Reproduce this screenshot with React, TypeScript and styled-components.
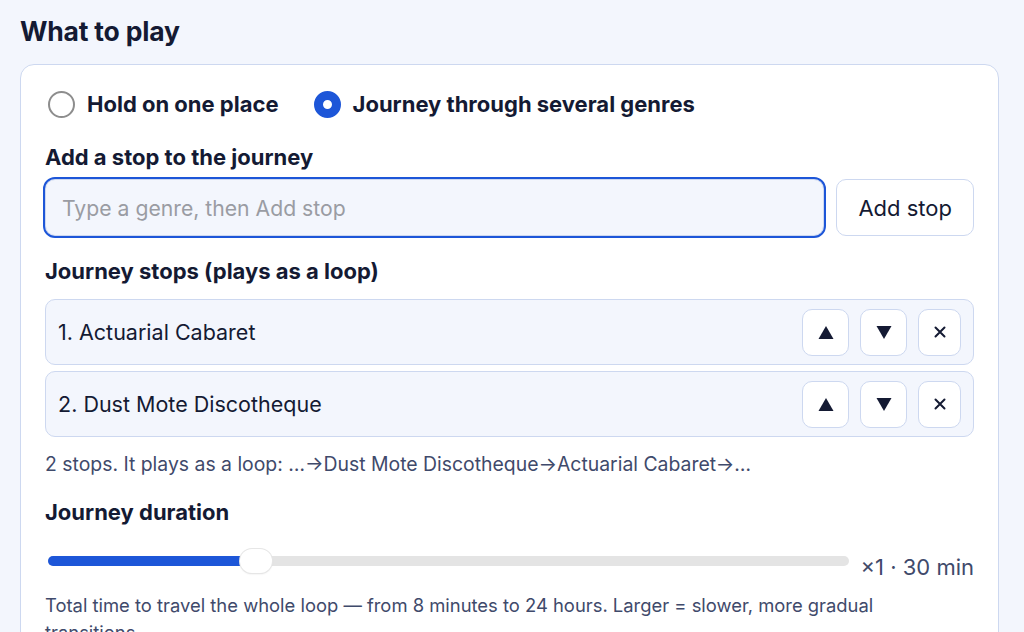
import styled, { createGlobalStyle } from "styled-components";

const GlobalStyle = createGlobalStyle`
  html, body {
    margin: 0;
    background: #f3f6fd;
    font-family: Inter, "Noto Sans", "Liberation Sans", sans-serif;
    color: #141a33;
  }
`;

const Page = styled.div`
  padding: 14px 25px 0 20px;
  height: 632px;
  overflow: hidden;
  box-sizing: border-box;
`;

const Heading = styled.h2`
  margin: 0 0 16px;
  font-size: 26.5px;
  line-height: 34px;
  font-weight: 700;
  letter-spacing: -0.2px;
`;

const Card = styled.div`
  background: #fff;
  border: 1px solid #cdd8f0;
  border-radius: 14px;
  padding: 25px 24px 24px;
`;

const RadioGroup = styled.div`
  display: flex;
  align-items: center;
  gap: 32px;
  margin-bottom: 27px;
`;

const RadioOption = styled.label`
  display: flex;
  align-items: center;
  gap: 12px;
  font-size: 22px;
  font-weight: 700;
  line-height: 28px;
`;

const RadioDot = styled.span<{ checked?: boolean }>`
  box-sizing: border-box;
  width: 27px;
  height: 27px;
  border-radius: 50%;
  border: ${(p) => (p.checked ? "9px solid #1d56d8" : "2px solid #8d8d8d")};
  background: #fff;
  margin-left: 3px;
`;

const Label = styled.div<{ spaced?: boolean }>`
  font-size: 22px;
  font-weight: 700;
  line-height: 24px;
  margin: ${(p) => (p.spaced ? "4px" : "0")} 0 10px;
`;

const InputRow = styled.div`
  display: flex;
  align-items: center;
  gap: 12px;
  margin-bottom: 23px;
`;

const TextInput = styled.input`
  flex: 1;
  box-sizing: border-box;
  height: 57px;
  margin: 0;
  padding: 0 16px;
  border: 1px solid #cdd8f0;
  border-radius: 10px;
  background: #f3f6fd;
  font: inherit;
  font-size: 21.2px;
  color: #141a33;
  outline: 2px solid #1d56d8;
  outline-offset: 0;
  &::placeholder {
    color: #9a9ca3;
  }
`;

const Button = styled.button`
  box-sizing: border-box;
  height: 57px;
  padding: 0 21px;
  border: 1px solid #cdd8f0;
  border-radius: 10px;
  background: #fff;
  font: inherit;
  font-size: 22px;
  color: #141a33;
`;

const StopList = styled.div`
  display: flex;
  flex-direction: column;
  gap: 6px;
  margin-top: 16px;
  margin-bottom: 16px;
`;

const StopRow = styled.div`
  display: flex;
  align-items: center;
  height: 66px;
  box-sizing: border-box;
  padding: 0 12px;
  background: #f3f6fd;
  border: 1px solid #cdd8f0;
  border-radius: 10px;
`;

const StopName = styled.span`
  flex: 1;
  font-size: 21.5px;
  line-height: 24px;
`;

const StopActions = styled.div`
  display: flex;
  gap: 11px;
`;

const IconButton = styled.button<{ narrow?: boolean }>`
  box-sizing: border-box;
  width: ${(p) => (p.narrow ? "43px" : "47px")};
  height: 47px;
  padding: 0;
  display: flex;
  align-items: center;
  justify-content: center;
  border: 1.5px solid #cdd8f0;
  border-radius: 10px;
  background: #fff;
  color: #141a33;
`;

const Summary = styled.p`
  margin: 0 0 25px;
  font-size: 19.4px;
  line-height: 22px;
  color: #3f4a6b;
`;

const SliderRow = styled.div`
  display: flex;
  align-items: center;
  gap: 12px;
  margin-top: 28px;
  height: 30px;
`;

const Track = styled.div`
  position: relative;
  flex: 1;
  height: 10px;
  margin-left: 3px;
  margin-top: -12px;
  border-radius: 5px;
  background: #e4e4e4;
`;

const Fill = styled.div`
  height: 100%;
  border-radius: 5px;
  background: #1d56d8;
`;

const Thumb = styled.div`
  position: absolute;
  top: 50%;
  width: 32px;
  height: 24px;
  border-radius: 12px;
  background: #fff;
  box-shadow: 0 0 0 1px #e6e6e6, 0 1px 2px rgba(0, 0, 0, 0.12);
  transform: translate(-50%, -50%);
`;

const Value = styled.span`
  font-size: 22px;
  line-height: 24px;
  color: #3f4a6b;
  white-space: nowrap;
`;

const Hint = styled.p`
  margin: 10px 0 0;
  font-size: 18.4px;
  line-height: 27px;
  color: #3f4a6b;
`;

const UpIcon = () => (
  <svg width="16" height="15" viewBox="0 0 16 15">
    <polygon points="8,1 15.5,14 0.5,14" fill="currentColor" />
  </svg>
);

const DownIcon = () => (
  <svg width="16" height="15" viewBox="0 0 16 15">
    <polygon points="0.5,1 15.5,1 8,14" fill="currentColor" />
  </svg>
);

const CloseIcon = () => (
  <svg width="12" height="12" viewBox="0 0 12 12">
    <path d="M1.5 1.5 L10.5 10.5 M10.5 1.5 L1.5 10.5" stroke="currentColor" strokeWidth="2" strokeLinecap="round" />
  </svg>
);

const stops = ["Actuarial Cabaret", "Dust Mote Discotheque"];
const duration = 26;

export default function App() {
  return (
    <Page>
      <GlobalStyle />
      <Heading>What to play</Heading>
      <Card>
        <RadioGroup>
          <RadioOption>
            <RadioDot />
            Hold on one place
          </RadioOption>
          <RadioOption>
            <RadioDot checked />
            Journey through several genres
          </RadioOption>
        </RadioGroup>

        <Label>Add a stop to the journey</Label>
        <InputRow>
          <TextInput placeholder="Type a genre, then Add stop" />
          <Button>Add stop</Button>
        </InputRow>

        <Label spaced>Journey stops (plays as a loop)</Label>
        <StopList>
          {stops.map((name, i) => (
            <StopRow key={name}>
              <StopName>
                {i + 1}. {name}
              </StopName>
              <StopActions>
                <IconButton>
                  <UpIcon />
                </IconButton>
                <IconButton>
                  <DownIcon />
                </IconButton>
                <IconButton narrow>
                  <CloseIcon />
                </IconButton>
              </StopActions>
            </StopRow>
          ))}
        </StopList>
        <Summary>
          2 stops. It plays as a loop: …→Dust Mote Discotheque→Actuarial Cabaret→…
        </Summary>

        <Label>Journey duration</Label>
        <SliderRow>
          <Track>
            <Fill style={{ width: `${duration}%` }} />
            <Thumb style={{ left: `${duration}%` }} />
          </Track>
          <Value>×1 · 30 min</Value>
        </SliderRow>
        <Hint>
          Total time to travel the whole loop — from 8 minutes to 24 hours. Larger = slower, more gradual
          transitions.
        </Hint>
      </Card>
    </Page>
  );
}
